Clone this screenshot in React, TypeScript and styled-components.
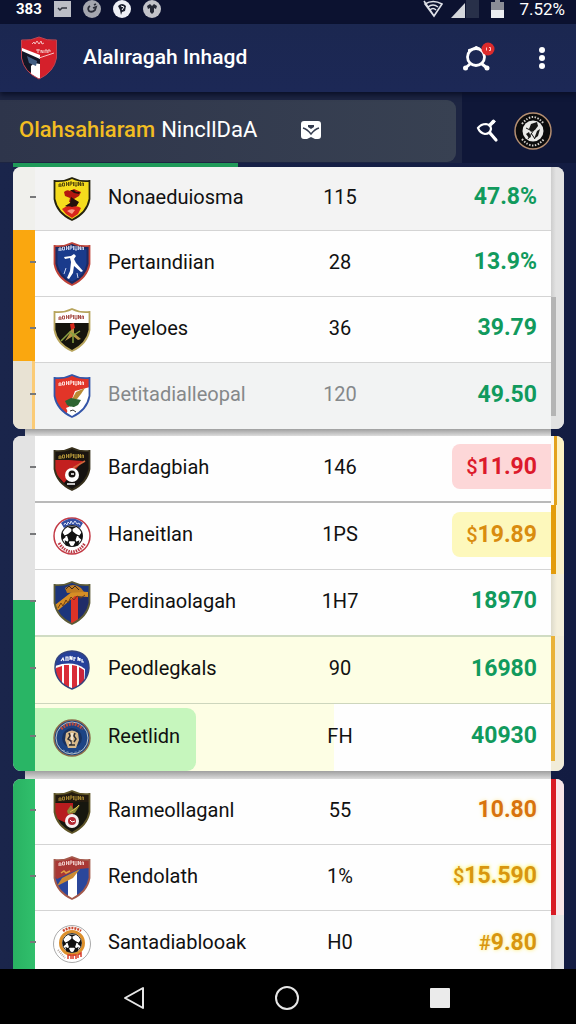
import React from "react";
import styled, { createGlobalStyle } from "styled-components";

const GlobalStyle = createGlobalStyle`
  *, *::before, *::after { box-sizing: border-box; }
  body { margin: 0; background: #16204a; }
  button { border: 0; padding: 0; background: none; color: inherit; font: inherit; cursor: pointer; }
  svg { display: block; }
`;

const Screen = styled.div`
  display: flex;
  flex-direction: column;
  height: 100vh;
  overflow: hidden;
  color: #fff;
  background: linear-gradient(90deg, #1a254b, #131c42);
  font-family: Roboto, "Liberation Sans", sans-serif;
`;

/* ---------- top bars ---------- */

const StatusBar = styled.div`
  display: flex;
  align-items: center;
  flex: none;
  height: 24px;
  padding: 0 11px 6px 16px;
  background: #0c1230;
`;

const StatusIcons = styled.div`
  display: flex;
  align-items: center;
  gap: 12px;
`;

const SystemIcons = styled(StatusIcons)`
  gap: 8px;
  margin-left: auto;
`;

const StatusText = styled.span<{ $strong?: boolean }>`
  font-size: ${(p) => (p.$strong ? 15 : 17)}px;
  font-weight: ${(p) => (p.$strong ? 700 : 400)};
  line-height: 18px;
`;

const AppBar = styled.header`
  display: flex;
  align-items: center;
  flex: none;
  height: 68px;
  padding: 0 20px;
  background: linear-gradient(#1b2750, #1c2856);
  box-shadow: 0 3px 5px #0a1028;
  z-index: 1;
`;

const Title = styled.h1`
  flex: 1;
  margin: 0 0 2px 25px;
  font-size: 21px;
  line-height: 30px;
  font-weight: 500;
`;

const IconButton = styled.button`
  display: flex;
  align-items: center;
  justify-content: center;
  width: 40px;
  height: 44px;
`;

const BarActions = styled.div`
  display: flex;
  gap: 24px;
  margin-right: -6px;
`;

const FilterBar = styled.div`
  display: flex;
  flex: none;
  height: 71px;
  background: #0f1738;
`;

const FilterSide = styled.div`
  flex: 1;
  padding: 8px 6px 1px 0;
  background: #1d2542;
`;

const FilterPanel = styled.nav`
  display: flex;
  align-items: center;
  height: 62px;
  padding: 0 0 2px 19px;
  border-radius: 0 9px 9px 0;
  background: linear-gradient(90deg, #2e354b, #384152);
`;

const FilterTab = styled.button<{ $active?: boolean }>`
  margin-right: 6px;
  font-size: 22px;
  line-height: 30px;
  font-weight: ${(p) => (p.$active ? 500 : 400)};
  color: ${(p) => (p.$active ? "#f2bd22" : "#fff")};
`;

const MailButton = styled(IconButton)`
  width: 36px;
  margin-left: 30px;
`;

const FilterActions = styled.div`
  display: flex;
  align-items: center;
  justify-content: flex-end;
  width: 114px;
  padding: 6px 23px 0 0;
  gap: 6px;
`;

const Progress = styled.div`
  flex: none;
  height: 4px;
  margin-left: 13px;
  background: linear-gradient(90deg, #1f9a59 40%, transparent 40%);
`;

/* ---------- standings ---------- */

const List = styled.main`
  flex: 1;
  min-height: 0;
  padding: 0 12px 0 13px;
  overflow-y: auto;
  scrollbar-width: none;
`;

const Card = styled.section`
  display: flex;
  border-radius: 8px;
  overflow: hidden;
  background: #e3e3e3;
`;

const CardGap = styled.div<{ $size: number }>`
  height: ${(p) => p.$size}px;
  margin: 0 13px 0 12px;
  background: linear-gradient(#9f9f9f, #dcdcdc);
`;

const Rail = styled.div<{ $side: "left" | "right" }>`
  display: flex;
  flex-direction: column;
  flex: none;
  width: ${(p) => (p.$side === "left" ? 22 : 13)}px;
`;

const Segment = styled.div<{ $grow: number; $fill: string }>`
  flex: ${(p) => p.$grow} 0 0;
  background: ${(p) => p.$fill};
`;

const Sheet = styled.table`
  flex: 1;
  width: 100%;
  table-layout: fixed;
  border-collapse: separate;
  border-spacing: 0;
  color: #111;
`;

const Row = styled.tr<{ $height: number; $fill?: string; $line?: string; $faded?: boolean }>`
  height: ${(p) => p.$height}px;
  background: ${(p) => p.$fill ?? "#fefefe"};
  color: ${(p) => (p.$faded ? "#85888a" : "#111")};
  & > * { border-bottom: ${(p) => p.$line ?? "1px solid #d4d4d4"}; }
  &:last-child > * { border-bottom: 0; }
`;

const CrestCell = styled.td<{ $highlight?: boolean }>`
  position: relative;
  width: 73px;
  padding: 0 0 0 18px;

  /* tick on the edge of the rail */
  &::after {
    content: "";
    position: absolute;
    left: -5px;
    top: 50%;
    width: 6px;
    height: 2px;
    margin-top: -3px;
    background: #77787a;
  }

  /* tinted block behind crest and name */
  &::before {
    content: "";
    display: ${(p) => (p.$highlight ? "block" : "none")};
    position: absolute;
    left: 0;
    top: 4px;
    bottom: 0;
    width: 161px;
    border-radius: 0 9px 9px 0;
    background: #c6f6bd;
  }

  & > svg { position: relative; }
`;

const NameCell = styled.th`
  position: relative;
  padding: 0 0 4px;
  font-size: 20px;
  line-height: 26px;
  font-weight: 400;
  text-align: left;
  white-space: nowrap;
`;

const CountCell = styled.td`
  width: 80px;
  padding: 0 0 4px;
  font-size: 20px;
  line-height: 26px;
  text-align: center;
`;

const ValueCell = styled.td`
  width: 171px;
  padding: 0 0 4px;
  text-align: right;
`;

const Value = styled.span<{ $color: string; $fill?: string; $glow?: string }>`
  display: inline-block;
  padding: 10px 14px 9px;
  border-radius: 8px 0 0 8px;
  font-size: 23px;
  line-height: 26px;
  font-weight: 700;
  vertical-align: middle;
  color: ${(p) => p.$color};
  background: ${(p) => p.$fill ?? "transparent"};
  text-shadow: ${(p) => (p.$glow ? `0 0 5px ${p.$glow}, 0 0 3px ${p.$glow}` : "none")};
`;

const Sign = styled.small`
  font-size: 20px;
  font-weight: 500;
`;

const NavBar = styled.footer`
  display: flex;
  align-items: center;
  justify-content: space-around;
  flex: none;
  height: 55px;
  padding: 3px 60px 0 57px;
  background: #000;
`;

/* ---------- crests ---------- */

const SHIELD = "M1.5 4Q11 5 19 1Q27 5 36.5 4L36.5 22Q34 36 19 43Q4 36 1.5 22Z";

function Shield({ id, edge, fill, children }: { id: string; edge: string; fill: string; children: React.ReactNode }) {
  return (
    <svg width="38" height="44" viewBox="0 0 38 44" aria-hidden="true">
      <clipPath id={id}><path d={SHIELD} /></clipPath>
      <g clipPath={`url(#${id})`}>
        <path d={SHIELD} fill={fill} />
        {children}
      </g>
      <path d={SHIELD} fill="none" stroke={edge} strokeWidth="1.8" />
    </svg>
  );
}

/* band of tiny, unreadable lettering across the top of a shield */
const Lettering = ({ color, y = 8 }: { color: string; y?: number }) => (
  <path
    d={`M6 ${y + 4}v-3h2v3m-2-1h2m1.500 0v-3h2v3h-2m4 0v-4m0 2h2m0 2v-4m1.500 4v-4h2v2h-2m3.500 2v-4m1.500 0v4h2v-4m1.500 4v-4l2 4v-4m1.500 1v3m0-3h1.500v3`}
    fill="none"
    stroke={color}
    strokeWidth=".9"
  />
);

const Ball = ({ cx, cy, r }: { cx: number; cy: number; r: number }) => (
  <g transform={`translate(${cx} ${cy}) scale(${r / 10})`}>
    <circle r="10" fill="#fff" stroke="#222" strokeWidth="1" />
    <path d="M0-5L5-1L3 5H-3L-5-1ZM-5-9L5-9L0-6.500ZM9.500-4L9.500 4L6 1ZM-9.500-4L-9.500 4L-6 1ZM3 6L7 4L6 9L1 10ZM-3 6L-7 4L-6 9L-1 10Z" fill="#111" />
    <path d="M0-7v3M4-1l3 1M2.500 4l2 3M-2.500 4l-2 3M-4-1l-3 1" stroke="#111" strokeWidth="1.200" />
  </g>
);

const crests: Record<string, React.ReactNode> = {
  yellow: (
    <Shield id="c-yellow" edge="#25230f" fill="#f5dc1d">
      <Lettering color="#4a3d0c" y={6} />
      <path d="M11 15q3-3 6-1l4-2 7 3-2 4-5 3 1 3h-6l1-4-5-2Z" fill="#b3180f" />
      <path d="M17 13h4l2 2h4l-1 2-5-1ZM18 20l3 2 5 3-3 5-6 1-5-2 5-3Z" fill="#25110b" />
      <path d="M9 32q5-4 10-2 5-2 9 1l-3 6-6 4-6-4Z" fill="#d9261b" />
      <path d="M14 34q4-3 8-1l-3 4" fill="#fa9a83" />
    </Shield>
  ),
  blue: (
    <Shield id="c-blue" edge="#bd4238" fill="#1a3b8c">
      <path d={SHIELD} fill="none" stroke="#1b2a63" strokeWidth="6" />
      <Lettering color="#d8def2" y={5} />
      <path d="M11 15l7-1 3-2 2 2-2 3 2 4 7 8-2 1-7-6-1 7-4 6-2-1 3-7 1-9-1-4-5 1Z" fill="#fff" />
      <path d="M13 26l-2 6M24 31l1 5" stroke="#c8d3ee" fill="none" />
    </Shield>
  ),
  gold: (
    <Shield id="c-gold" edge="#b7a45c" fill="#15140d">
      <path d="M1 0H37V15H1Z" fill="#fff" />
      <Lettering color="#a2443c" y={8} />
      <path d="M18 17l3 1v7l7 6-3 1-5-4-8 5 5-8-3 2 4-5Z" fill="#b79744" />
      <path d="M17 16l4-1 1 5-4 2Z" fill="#d72a1d" />
      <path d="M8 33l9-9 4 3 6-4M20 25v10" fill="none" stroke="#8aa042" strokeWidth="1.500" />
    </Shield>
  ),
  redwhite: (
    <Shield id="c-redwhite" edge="#3355a8" fill="#fff">
      <path d="M1 0H37V13L22 17 13 41 1 30Z" fill="#e23528" />
      <Lettering color="#ffe9e4" y={8} />
      <path d="M32 14L23 18l-5 9 6-2 4-5Z" fill="#b98b35" />
      <path d="M12 27l6-3 5 1 5 1-3 5-6 3-5-3Z" fill="#2d6531" />
      <path d="M13 34q5-3 10 0l-2 6h-5Z" fill="#fff" />
      <path d="M17 37l3-1 3 2" stroke="#333" fill="none" />
    </Shield>
  ),
  redblack: (
    <Shield id="c-redblack" edge="#37301c" fill="#151210">
      <path d="M2 12L30 14 11 36 2 26Z" fill="#c3201f" />
      <path d="M1 0H37V13H1Z" fill="#1b150f" />
      <Lettering color="#b99a3a" y={8} />
      <path d="M32 14L20 21" stroke="#d0653a" strokeWidth="1.500" />
      <circle cx="19" cy="28" r="7" fill="#fff" />
      <circle cx="19" cy="27" r="3.500" fill="#151210" />
      <path d="M18 27h3M14 37h8" stroke="#fff" strokeWidth="1.500" />
    </Shield>
  ),
  roundball: (
    <svg width="38" height="44" viewBox="0 0 38 44" aria-hidden="true">
      <circle cx="19" cy="22" r="18" fill="#fff" stroke="#c33a45" strokeWidth="1.500" />
      <path d="M8 9q11-9 22 0l-3 5q-8-6-16 0Z" fill="#3450a4" />
      <path d="M11 11l1-2 2 2 1-3 2 2 1-3 2 3 2-3 2 3 2-1 1 2" stroke="#e5eaf7" strokeWidth=".9" fill="none" />
      <Ball cx={19} cy={22} r={10.5} />
      <path d="M6 29Q11 37 19 38Q27 37 32 29" stroke="#b93844" strokeWidth="3" strokeDasharray="1.500 1" fill="none" />
    </svg>
  ),
  barca: (
    <Shield id="c-barca" edge="#5c5a36" fill="#1c357c">
      <path d="M18 12H25V44H18Z" fill="#dd3327" />
      <path d="M25 12H37V34L25 42Z" fill="#202c68" />
      <path d="M2 24L20 10 35 11v5L22 15 2 32Z" fill="#d68e25" />
      <path d="M12 7q8-6 16 0l3 4-17 1Z" fill="#bf7c22" />
      <path d="M5 27l3-5 2 3 3-6 2 3 3-6 3 3 3-4 4 2 4-3" stroke="#6c3f15" fill="none" />
      <path d="M13 8l3-3 3 3 3-3 4 4" stroke="#3a2a20" fill="none" />
    </Shield>
  ),
  stripes: (
    <svg width="38" height="44" viewBox="0 0 38 44" aria-hidden="true">
      <clipPath id="c-stripes"><path d="M19 3Q36 4 36 20Q35 35 19 41Q3 35 2 20Q2 4 19 3Z" /></clipPath>
      <g clipPath="url(#c-stripes)">
        <path d="M0 0H38V44H0Z" fill="#26419a" />
        <path d="M2 18Q20 12 32 21L31 44H0Z" fill="#fff" />
        <path d="M3 20l6-2v22H3ZM11 17h5v26h-5ZM19 17l5 1v26h-5Z" fill="#d92c38" />
        <path d="M26 19l5 3v16l-5 4Z" fill="#c9243c" />
      </g>
      <path d="M8 13l2-3 1 3m2 0v-4h2v4m2-1v-4l2 4v-4m2 1v4m0-3h2m2 3v-4l2 4v-3m2 1v3h2" stroke="#fff" strokeWidth="1.200" fill="none" />
      <path d="M19 3Q36 4 36 20Q35 35 19 41Q3 35 2 20Q2 4 19 3Z" fill="none" stroke="#33447e" strokeWidth="1.500" />
    </svg>
  ),
  roundblue: (
    <svg width="38" height="44" viewBox="0 0 38 44" aria-hidden="true">
      <circle cx="19" cy="22" r="18" fill="#1d4484" stroke="#8c6b4a" strokeWidth="1.500" />
      <circle cx="19" cy="22" r="16" fill="none" stroke="#dfe2d8" strokeWidth=".8" />
      <path d="M8 13q11-10 22 0" stroke="#bd4b3d" strokeWidth="3" fill="none" strokeDasharray="2 1" />
      <circle cx="19" cy="22" r="10" fill="#18315f" />
      <path d="M13 17q6-5 12 0l1 7-3 8h-8l-3-8Z" fill="#d7b88a" />
      <path d="M16 17l1 3-2 3 3 2v4M22 17l-1 3 2 3-2 3M16 29h6" stroke="#2b2c33" strokeWidth="1.500" fill="none" />
      <path d="M19 17v7M16 27h2" stroke="#fff" strokeWidth="1.200" />
      <path d="M10 34q9 5 18 0" stroke="#7d9bc4" strokeDasharray="2 2" fill="none" />
    </svg>
  ),
  redgreen: (
    <Shield id="c-redgreen" edge="#5e5427" fill="#17170f">
      <path d="M2 13H20V36L2 28Z" fill="#b81c1e" />
      <path d="M1 0H37V12H1Z" fill="#241b0f" />
      <Lettering color="#a98a34" y={7} />
      <path d="M14 21l4-6 2 4 7-4-5 8-7 1Z" fill="#8d8a35" />
      <path d="M17 22l5-3 4-4" stroke="#d9bb50" fill="none" />
      <circle cx="19" cy="31" r="7" fill="#f5eeee" />
      <circle cx="19" cy="31" r="4" fill="#b32832" />
      <path d="M17 30l2 2 3-1" stroke="#fff" fill="none" />
    </Shield>
  ),
  bluewhite: (
    <Shield id="c-bluewhite" edge="#a3594b" fill="#2b479b">
      <path d="M1 0H37V12L26 13 4 23 1 20Z" fill="#a93835" />
      <Lettering color="#f3d6d1" y={6} />
      <path d="M15 21L24 15V42H15Z" fill="#fff" />
      <path d="M4 30L9 22 27 13 20 22Z" fill="#cc8a32" />
      <path d="M8 17l3-2 2 2 4-2" stroke="#e2a344" strokeWidth="1.500" fill="none" />
    </Shield>
  ),
  roundorange: (
    <svg width="38" height="44" viewBox="0 0 38 44" aria-hidden="true">
      <circle cx="19" cy="22" r="18.500" fill="#fff" stroke="#a9a9a9" />
      <circle cx="19" cy="21" r="11.500" fill="none" stroke="#dd902c" strokeWidth="3" />
      <path d="M10 9q9-6 18 0" stroke="#c9472f" strokeWidth="2.500" strokeDasharray="2 1" fill="none" />
      <Ball cx={19} cy={21} r={9.5} />
      <path d="M15 37v-4h3v4m2 0v-4h3v4m2-1v-3l3-2v4" stroke="#d83c2b" strokeWidth="1.500" fill="none" />
      <path d="M5 28l7 8" stroke="#b4a8a2" strokeWidth="2" strokeDasharray="1 1" />
    </svg>
  ),
};

/* ---------- data ---------- */

interface Team {
  crest: string;
  name: string;
  count: string;
  value: string;
  color: string;
  sign?: string;
  valueFill?: string;
  glow?: string;
  fill?: string;
  line?: string;
  height?: number;
  faded?: boolean;
  highlight?: boolean;
}

interface Group {
  label: string;
  rowHeight: number;
  left: [number, string][];
  right: [number, string][];
  teams: Team[];
}

const GREEN = "#119a5d";
const AMBER = "#d8960f";

const groups: Group[] = [
  {
    label: "Group 1",
    rowHeight: 66,
    left: [
      [63, "#f0f0ec"],
      [131, "#faa70f"],
      [68, "linear-gradient(90deg, #e8e2d3 19px, #fbcb76 19px)"],
    ],
    right: [
      [130, "linear-gradient(90deg, #cdcdcd, #e2e2e2 5px)"],
      [119, "linear-gradient(90deg, #b4b4b4 5px, #e2e2e2 5px)"],
      [13, "#e2e2e2"],
    ],
    teams: [
      { crest: "yellow", name: "Nonaeduiosma", count: "115", value: "47.8%", color: GREEN, fill: "#f3f3f3", height: 64 },
      { crest: "blue", name: "Pertaındiian", count: "28", value: "13.9%", color: GREEN },
      { crest: "gold", name: "Peyeloes", count: "36", value: "39.79", color: GREEN },
      { crest: "redwhite", name: "Betitadialleopal", count: "120", value: "49.50", color: GREEN, fill: "#f2f3f3", faded: true },
    ],
  },
  {
    label: "Group 2",
    rowHeight: 67,
    left: [
      [164, "#e3e3e3"],
      [171, "#29b565"],
    ],
    right: [
      [69, "linear-gradient(90deg, #fbfaf4 3px, #e3a21c 3px, #e3a21c 6px, #fdf2c4 6px)"],
      [69, "linear-gradient(90deg, #e39c0c 5px, #fbf1ca 5px)"],
      [62, "linear-gradient(90deg, #dddacb, #f4efdc 6px)"],
      [125, "linear-gradient(90deg, #e9b23a 4px, #f1ecd9 4px)"],
      [10, "#f1ecd9"],
    ],
    teams: [
      { crest: "redblack", name: "Bardagbiah", count: "146", sign: "$", value: "11.90", color: "#dc1a2b", valueFill: "#fdd7d8", line: "2px solid #b9b9b9" },
      { crest: "roundball", name: "Haneitlan", count: "1PS", sign: "$", value: "19.89", color: "#d98c0f", valueFill: "#fdf8bc" },
      { crest: "barca", name: "Perdinaolagah", count: "1H7", value: "18970", color: GREEN, line: "2px solid #d0dcc3" },
      { crest: "stripes", name: "Peodlegkals", count: "90", value: "16980", color: GREEN, fill: "#fdfee4", line: "1px solid #cdd6bd" },
      {
        crest: "roundblue", name: "Reetlidn", count: "FH", value: "40930", color: GREEN, highlight: true,
        fill: "linear-gradient(90deg, #fdfee4 58%, #fefefe 58%)",
      },
    ],
  },
  {
    label: "Group 3",
    rowHeight: 66,
    left: [[198, "linear-gradient(90deg, #29b262, #31bf6c)"]],
    right: [
      [136, "linear-gradient(90deg, #d81a24 5px, #f8e6e8 5px)"],
      [62, "linear-gradient(90deg, #d2d2d2, #e6e6e6 5px)"],
    ],
    teams: [
      { crest: "redgreen", name: "Raımeollaganl", count: "55", value: "10.80", color: "#d8730d", glow: "#fff0c4" },
      { crest: "bluewhite", name: "Rendolath", count: "1%", sign: "$", value: "15.590", color: AMBER, glow: "#fff06a" },
      { crest: "roundorange", name: "Santadiablooak", count: "H0", sign: "#", value: "9.80", color: AMBER, glow: "#fff2a0" },
    ],
  },
];

/* ---------- page ---------- */

function Standings({ group }: { group: Group }) {
  return (
    <Card>
      <Rail $side="left">
        {group.left.map(([grow, fill], i) => <Segment key={i} $grow={grow} $fill={fill} />)}
      </Rail>
      <Sheet aria-label={group.label}>
        <tbody>
          {group.teams.map((t) => (
            <Row key={t.name} $height={t.height ?? group.rowHeight} $fill={t.fill} $line={t.line} $faded={t.faded}>
              <CrestCell $highlight={t.highlight}>{crests[t.crest]}</CrestCell>
              <NameCell scope="row">{t.name}</NameCell>
              <CountCell>{t.count}</CountCell>
              <ValueCell>
                <Value $color={t.color} $fill={t.valueFill} $glow={t.glow}>
                  {t.sign && <Sign>{t.sign}</Sign>}
                  {t.value}
                </Value>
              </ValueCell>
            </Row>
          ))}
        </tbody>
      </Sheet>
      <Rail $side="right">
        {group.right.map(([grow, fill], i) => <Segment key={i} $grow={grow} $fill={fill} />)}
      </Rail>
    </Card>
  );
}

export default function App() {
  return (
    <Screen>
      <GlobalStyle />
      <StatusBar>
        <StatusIcons>
          <StatusText $strong>383</StatusText>
          <svg width="17" height="16" viewBox="0 0 17 16"><path d="M0 0H17V16H0Z" fill="#bcbec6" /><path d="M4 7l2 2 2-2h5" stroke="#30343f" strokeWidth="1.500" fill="none" /></svg>
          <svg width="18" height="18" viewBox="0 0 18 18"><circle cx="9" cy="9" r="9" fill="#a5a7af" /><path d="M7 6q-3 2-1 5 3 2 6-1l1-3-3 1M11 5l2-1" stroke="#2a2d38" strokeWidth="1.800" fill="none" /></svg>
          <svg width="18" height="18" viewBox="0 0 18 18"><circle cx="9" cy="9" r="9" fill="#eef0f5" /><path d="M5 6q4-4 8 0l-1 5-3 1-1 3-1-5Z" fill="#1a1e2d" /><path d="M8 6l3 1-2 3" stroke="#fff" fill="none" /></svg>
          <svg width="18" height="18" viewBox="0 0 18 18"><circle cx="9" cy="9" r="9" fill="#c3c4ca" /><path d="M4 6l3-2 2 2 2-2 3 2-1 3-2-1v4l-2 2-2-2V8L5 9Z" fill="#252936" /></svg>
        </StatusIcons>
        <SystemIcons>
          <svg width="20" height="18" viewBox="0 0 20 18" fill="none" stroke="#dfe1e8" strokeWidth="1.600"><path d="M2 4Q10-1 19 4L11 16ZM5 7q5-4 10 0M7 10q3-3 6 0M1 1l10 15" /></svg>
          <svg width="28" height="18" viewBox="0 0 28 18"><path d="M15 0H28V18H15Z" fill="#283049" /><path d="M0 18L14 3V18Z" fill="#d5d7dc" /></svg>
          <svg width="24" height="18" viewBox="0 0 24 18"><path d="M4 2h4V0h5v2h4v16H4Z" fill="#8b8d96" /><path d="M4 10H17V18H4Z" fill="#eceef2" /></svg>
          <StatusText>7.52%</StatusText>
        </SystemIcons>
      </StatusBar>

      <AppBar>
        <svg width="38" height="44" viewBox="0 0 38 44" aria-hidden="true">
          <clipPath id="c-app"><path d={SHIELD} /></clipPath>
          <path d={SHIELD} fill="#d5202b" />
          <g clipPath="url(#c-app)">
            <path d="M2 14L20 20V44L2 30Z" fill="#111626" />
            <path d="M2 12L20 19V23L2 15Z" fill="#fff" />
            <path d="M11 30l3-3 6 1v16l-9-6Z" fill="#fff" />
            <path d="M7 20l10 5-1 5-7-3Z" fill="#425f84" />
            <path d="M19 22l15-5" stroke="#f4c3c4" />
            <path d="M12 8l2-2 1 2 2-3 2 3 2-3 1 3 2-1M18 17v-4m-2 1h4m1 3v-3l2 3v-3m2 3v-3h2v3m1 0v-3h2v2" stroke="#f3c1c1" fill="none" />
          </g>
          <path d={SHIELD} fill="none" stroke="#bd4652" />
        </svg>
        <Title>Alalıragah Inhagd</Title>
        <BarActions>
          <IconButton aria-label="Search people">
            <svg width="34" height="32" viewBox="0 0 34 32">
              <circle cx="15" cy="15" r="8.500" fill="none" stroke="#fff" strokeWidth="2.800" />
              <path d="M8 10V8l4-1 3-2 4 2" stroke="#fff" strokeWidth="2" strokeLinejoin="round" fill="none" />
              <path d="M9 22L4.500 26M21 22L26 26" stroke="#fff" strokeWidth="3" strokeLinecap="round" />
              <circle cx="4.500" cy="26" r="2.500" fill="#fff" />
              <circle cx="26" cy="26" r="2.500" fill="#fff" />
              <circle cx="27" cy="7" r="6.500" fill="#dc2b2c" />
              <path d="M25.500 5.500v3M28 5.500h1.500v3h-1.500" stroke="#ffc7c4" fill="none" />
            </svg>
          </IconButton>
          <IconButton aria-label="More options">
            <svg width="8" height="24" viewBox="0 0 8 24" fill="#fff"><circle cx="4" cy="4" r="3" /><circle cx="4" cy="12" r="3" /><circle cx="4" cy="20" r="3" /></svg>
          </IconButton>
        </BarActions>
      </AppBar>

      <FilterBar>
        <FilterSide>
          <FilterPanel>
            <FilterTab $active>Olahsahiaram</FilterTab>
            <FilterTab>NincllDaA</FilterTab>
            <MailButton aria-label="Messages">
              <svg width="20" height="18" viewBox="0 0 20 18">
                <path d="M3 0H17Q20 0 20 3V15Q20 18 17 18H14L10 16 6 18H3Q0 18 0 15V3Q0 0 3 0Z" fill="#fff" />
                <path d="M2 7q4 1 8 6 4-5 8-6" stroke="#353d50" strokeWidth="1.500" fill="none" />
                <path d="M7 4h6v2l-3 2-3-2Z" fill="#353d50" />
              </svg>
            </MailButton>
          </FilterPanel>
        </FilterSide>
        <FilterActions>
          <IconButton aria-label="Search">
            <svg width="24" height="26" viewBox="0 0 24 26" fill="none" stroke="#fff" strokeLinecap="round">
              <path d="M3 10Q6 6 11 6Q16 7 16 11Q15 16 10 16Q5 15 3 10Z" strokeWidth="2.200" />
              <path d="M15 15L21 22" strokeWidth="3.200" />
              <path d="M15 7L18 4" strokeWidth="3.500" />
              <circle cx="18.500" cy="3.500" r="1.500" fill="#fff" />
            </svg>
          </IconButton>
          <IconButton aria-label="Profile">
            <svg width="38" height="38" viewBox="0 0 38 38">
              <circle cx="19" cy="19" r="18" fill="#0b0b0c" stroke="#b48e71" strokeWidth="1.500" />
              <path d="M8 12Q19-2 30 12M8 27Q19 40 30 27" fill="none" stroke="#d3d0cc" strokeWidth="2" strokeDasharray="1.500 1.500" />
              <circle cx="19" cy="19" r="10.500" fill="#e9e9e7" />
              <path d="M17 12l6-2 1 4-3 4-4 2-2-3ZM23 19l3-2-2 7-4 3ZM12 22l3-2 2 5-2 1Z" fill="#151515" />
              <path d="M14 27l9-14M17 21l4 6M12 16l4 2" stroke="#151515" strokeWidth="1" />
            </svg>
          </IconButton>
        </FilterActions>
      </FilterBar>
      <Progress />

      <List>
        <Standings group={groups[0]} />
        <CardGap $size={7} />
        <Standings group={groups[1]} />
        <CardGap $size={8} />
        <Standings group={groups[2]} />
      </List>

      <NavBar>
        <IconButton aria-label="Back">
          <svg width="22" height="24" viewBox="0 0 22 24"><path d="M20 2V22L2 12Z" fill="none" stroke="#e6e6e6" strokeWidth="2" strokeLinejoin="round" /></svg>
        </IconButton>
        <IconButton aria-label="Home">
          <svg width="26" height="26" viewBox="0 0 26 26"><circle cx="13" cy="13" r="11" fill="none" stroke="#e6e6e6" strokeWidth="2" /></svg>
        </IconButton>
        <IconButton aria-label="Recent apps">
          <svg width="22" height="22" viewBox="0 0 22 22"><rect x="1" y="1" width="20" height="20" rx="1" fill="#ebebeb" /></svg>
        </IconButton>
      </NavBar>
    </Screen>
  );
}
